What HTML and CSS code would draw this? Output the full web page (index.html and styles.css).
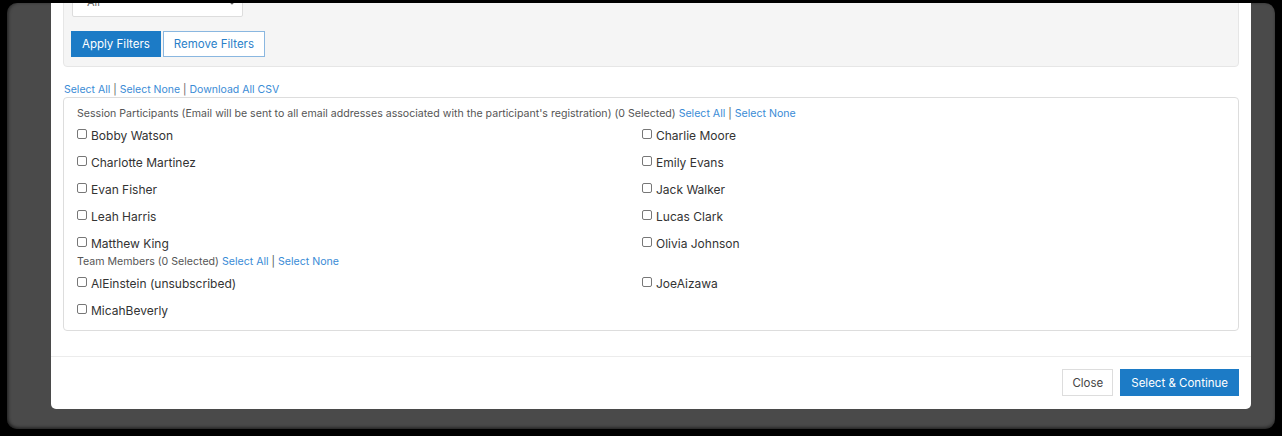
FILE: index.html
```html
<!DOCTYPE html>
<html lang="en">
<head>
<meta charset="utf-8">
<title>Select Recipients</title>
<link rel="stylesheet" href="styles.css">
</head>
<body>
<div class="frame">
  <div class="modal">
    <div class="modal-body">
      <div class="filters">
        <div class="select">
          <span>All</span>
          <svg class="chev" width="8" height="5" viewBox="0 0 8 5"><path d="M1 1l3 3 3-3" fill="none" stroke="#666" stroke-width="1.2"/></svg>
        </div>
        <div class="filter-actions">
          <button class="btn btn-primary">Apply Filters</button>
          <button class="btn btn-outline">Remove Filters</button>
        </div>
      </div>
      <div class="bulk-links">
        <a href="#">Select All</a> | <a href="#">Select None</a> | <a href="#">Download All CSV</a>
      </div>
      <div class="recipients">
        <div class="group-head">Session Participants (Email will be sent to all email addresses associated with the participant's registration) (0 Selected) <a href="#">Select All</a> | <a href="#">Select None</a></div>
        <div class="grid">
          <label class="item"><input type="checkbox"><span>Bobby Watson</span></label>
          <label class="item"><input type="checkbox"><span>Charlie Moore</span></label>
          <label class="item"><input type="checkbox"><span>Charlotte Martinez</span></label>
          <label class="item"><input type="checkbox"><span>Emily Evans</span></label>
          <label class="item"><input type="checkbox"><span>Evan Fisher</span></label>
          <label class="item"><input type="checkbox"><span>Jack Walker</span></label>
          <label class="item"><input type="checkbox"><span>Leah Harris</span></label>
          <label class="item"><input type="checkbox"><span>Lucas Clark</span></label>
          <label class="item"><input type="checkbox"><span>Matthew King</span></label>
          <label class="item"><input type="checkbox"><span>Olivia Johnson</span></label>
        </div>
        <div class="group-head team">Team Members (0 Selected) <a href="#">Select All</a> | <a href="#">Select None</a></div>
        <div class="grid">
          <label class="item"><input type="checkbox"><span>AlEinstein (unsubscribed)</span></label>
          <label class="item"><input type="checkbox"><span>JoeAizawa</span></label>
          <label class="item"><input type="checkbox"><span>MicahBeverly</span></label>
        </div>
      </div>
    </div>
    <div class="modal-footer">
      <button class="btn btn-default">Close</button>
      <button class="btn btn-primary">Select &amp; Continue</button>
    </div>
  </div>
</div>
</body>
</html>
```
FILE: styles.css
```css
html, body {
  margin: 0;
  padding: 0;
  background: #000;
  height: 436px;
  overflow: hidden;
}
body {
  font-family: "Inter", "Noto Sans", sans-serif;
  color: #333;
  padding: 3px 7px 7px 7px;
  box-sizing: border-box;
}
a { color: #3a8bd6; text-decoration: none; }

.frame {
  height: 426px;
  background: #4a4a4a;
  border-radius: 10px;
  overflow: hidden;
  box-shadow: inset 2px 0 3px rgba(0,0,0,0.35), inset 0 -2px 3px rgba(0,0,0,0.35);
}
.modal {
  width: 1200px;
  margin: -38px 0 0 44px;
  background: #fff;
  border-radius: 5px;
}
.modal-body {
  padding: 12px 12px 25px 12px;
}
.filters {
  background: #f5f5f5;
  border: 1px solid #e6e6e6;
  border-radius: 4px;
  padding: 9px 8px 9px 7px;
}
.select {
  width: 171px;
  height: 30px;
  box-sizing: border-box;
  background: #fff;
  border: 1px solid #ddd;
  border-radius: 2px;
  display: flex;
  align-items: center;
  justify-content: space-between;
  padding: 0 6px 0 14px;
  margin-left: 1px;
  font-size: 11px;
  color: #666;
}
.filter-actions {
  display: flex;
  gap: 2px;
  margin-top: 14px;
}
.btn {
  font-family: inherit;
  height: 26px;
  box-sizing: border-box;
  font-size: 11.5px;
  padding: 0 10px;
  border-radius: 0;
  cursor: pointer;
}
.btn-primary {
  background: #1c7bc6;
  border: 1px solid #1c7bc6;
  color: #fff;
}
.btn-outline {
  background: #fff;
  border: 1px solid #8ab7e0;
  color: #2a7fc9;
}
.btn-default {
  background: #fff;
  border: 1px solid #ddd;
  color: #444;
}
.bulk-links {
  margin-top: 16px;
  font-size: 10.5px;
  line-height: 14px;
  color: #666;
  padding-left: 1px;
}
.recipients {
  border: 1px solid #ddd;
  border-radius: 4px;
  padding: 9px 14px 11px 13px;
}
.group-head {
  font-size: 10.6px;
  line-height: 14px;
  color: #555;
}
.group-head.team { margin-top: 3px; }
.grid {
  display: grid;
  grid-template-columns: 565px 1fr;
  row-gap: 9px;
  margin-top: 5px;
}
.item {
  display: flex;
  align-items: center;
  gap: 4px;
  height: 18px;
  font-size: 12px;
  color: #333;
}
.item input {
  appearance: none;
  -webkit-appearance: none;
  margin: 0 0 3px 0;
  width: 10px;
  height: 10px;
  border: 1px solid #777;
  border-radius: 2px;
  background: #fff;
}
.modal-footer {
  border-top: 1px solid #ececec;
  padding: 12px 12px 13px 12px;
  display: flex;
  justify-content: flex-end;
  gap: 7px;
}
.modal-footer .btn {
  height: 27px;
  font-size: 11.5px;
}
.modal-footer .btn-default { padding: 0 9px; }
.modal-footer .btn-primary { padding: 0 10px; }
```
